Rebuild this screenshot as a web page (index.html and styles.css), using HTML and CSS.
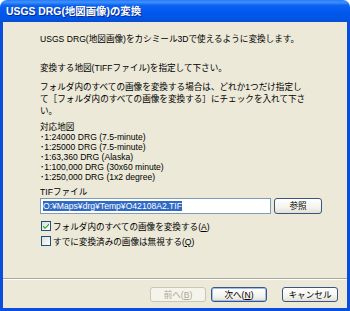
FILE: index.html
```html
<!DOCTYPE html>
<html lang="ja">
<head>
    <meta charset="UTF-8">
    <title>USGS DRG(地図画像)の変換</title>
    <link rel="stylesheet" href="styles.css">
</head>
<body>
    <div class="window">
        <div class="titlebar">USGS DRG(地図画像)の変換</div>
        <div class="client">
            <div class="content">
                <p class="intro">USGS DRG(地図画像)をカシミール3Dで使えるように変換します。</p>
                <p class="lead">変換する地図(TIFFファイル)を指定して下さい。</p>
                <p class="para">フォルダ内のすべての画像を変換する場合は、どれか1つだけ指定し<br>て［フォルダ内のすべての画像を変換する］にチェックを入れて下さ<br>い。</p>
                <div class="maps">
                    <div>対応地図</div>
                    <div>･1:24000 DRG (7.5-minute)</div>
                    <div>･1:25000 DRG (7.5-minute)</div>
                    <div>･1:63,360 DRG (Alaska)</div>
                    <div>･1:100,000 DRG (30x60 minute)</div>
                    <div>･1:250,000 DRG (1x2 degree)</div>
                </div>
                <label class="file-label" for="tif">TIFファイル</label>
                <div class="file-row">
                    <div class="textbox" id="tif"><span class="selected">O:¥Maps¥drg¥Temp¥O42108A2.TIF</span></div>
                    <button class="btn browse">参照</button>
                </div>
                <div class="check-row">
                    <span class="checkbox checked">
                        <svg width="8" height="8" viewBox="0 0 8 8"><path d="M1 3.5 L3 5.5 L7 1.5 L7 3 L3 7 L1 5 Z" fill="#21a121"/></svg>
                    </span>
                    <span>フォルダ内のすべての画像を変換する(<u>A</u>)</span>
                </div>
                <div class="check-row">
                    <span class="checkbox"></span>
                    <span>すでに変換済みの画像は無視する(<u>Q</u>)</span>
                </div>
            </div>
            <div class="separator"></div>
            <div class="footer">
                <button class="btn disabled">前へ(<u>B</u>)</button>
                <button class="btn default">次へ(<u>N</u>)</button>
                <button class="btn cancel">キャンセル</button>
            </div>
        </div>
    </div>
</body>
</html>
```

FILE: styles.css
```css
* {
    box-sizing: border-box;
    margin: 0;
    padding: 0;
}

body {
    background: #ffffff;
    font-family: 'Liberation Sans', 'Noto Sans CJK JP', sans-serif;
    font-size: 8.6px;
    color: #000000;
}

.window {
    width: 350px;
    height: 311px;
    display: flex;
    flex-direction: column;
}

.titlebar {
    height: 22px;
    padding-left: 6px;
    line-height: 23px;
    font-size: 10.4px;
    font-weight: bold;
    color: #ffffff;
    text-shadow: 1px 1px 0 #0a2a8e;
    border-radius: 7px 7px 0 0;
    background: linear-gradient(#2a7af5 0%, #3d92ff 10%, #0c62f0 25%, #0058ee 55%, #0055e5 85%, #0a4ccf 100%);
}

.client {
    flex: 1;
    display: flex;
    flex-direction: column;
    background: #ece9d8;
    border: 3px solid #0a4ee0;
    border-top: none;
}

.content {
    flex: 1;
    padding: 11px 0 0 37px;
}

.intro,
.lead {
    line-height: 12px;
}

.lead {
    margin-top: 17px;
}

.para {
    margin-top: 7px;
    line-height: 12px;
}

.maps {
    margin-top: 5px;
    line-height: 10px;
}

.file-label {
    display: block;
    margin-top: 5px;
    line-height: 11px;
}

.file-row {
    display: flex;
    align-items: center;
    gap: 3px;
    height: 16px;
}

.textbox {
    width: 231px;
    height: 16px;
    padding: 1px 2px;
    border: 1px solid #7f9db9;
    background: #ffffff;
    line-height: 12px;
}

.selected {
    background: #316ac5;
    color: #ffffff;
}

.btn {
    font-family: 'Liberation Sans', 'Noto Sans CJK JP', sans-serif;
    font-size: 8.6px;
    color: #000000;
    height: 15px;
    border: 1px solid #3a5680;
    border-radius: 3px;
    background: linear-gradient(#ffffff, #f4f3ee 60%, #e3e0d6);
    line-height: 12px;
}

.btn u {
    text-decoration: underline;
}

.browse {
    width: 48px;
    height: 16px;
}

.check-row {
    display: flex;
    align-items: center;
    gap: 2px;
    height: 15px;
    margin-left: 1px;
}

.file-row + .check-row {
    margin-top: 4px;
}

.checkbox {
    width: 10px;
    height: 10px;
    border: 1px solid #1c5180;
    background: linear-gradient(135deg, #dcdcd7, #ffffff);
    display: flex;
    align-items: center;
    justify-content: center;
}

.separator {
    border-top: 1px solid #aca899;
    border-bottom: 1px solid #ffffff;
}

.footer {
    display: flex;
    justify-content: flex-end;
    padding: 7px 9px 6px 0;
    gap: 5px;
}

.footer .btn {
    width: 56px;
}

.disabled {
    color: #aca899;
    border-color: #c9c7ba;
    background: #f5f4ea;
}

.default {
    box-shadow: inset 0 0 0 1px #9ebdf0;
}

.cancel {
    margin-left: 10px;
}
```
